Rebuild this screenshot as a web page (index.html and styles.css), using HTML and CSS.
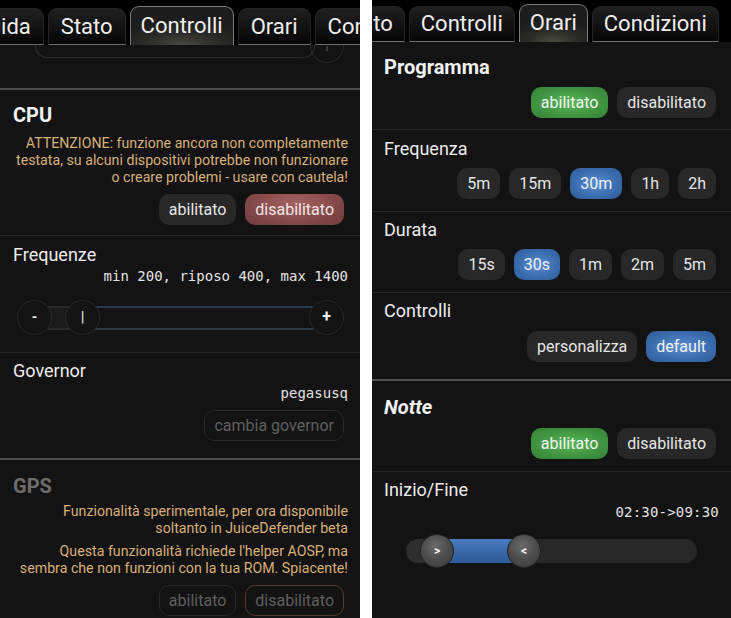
FILE: index.html
```html
<!DOCTYPE html>
<html lang="it">
<head>
<meta charset="utf-8">
<title>JuiceDefender</title>
<link rel="stylesheet" href="styles.css">
</head>
<body>
<div class="screens">
  <section class="phone phone-left">
    <nav class="tabs tabs-left">
      <div class="tab tab-first-left">Guida</div>
      <div class="tab">Stato</div>
      <div class="tab active">Controlli</div>
      <div class="tab">Orari</div>
      <div class="tab">Condizioni</div>
    </nav>
    <div class="remnant">
      <div class="remnant-card"></div>
      <div class="remnant-knob">l</div>
    </div>
    <div class="sec thick sec-cpu">
      <h2 class="title">CPU</h2>
      <p class="note note-cpu">ATTENZIONE: funzione ancora non completamente<br>testata, su alcuni dispositivi potrebbe non funzionare<br>o creare problemi - usare con cautela!</p>
      <div class="btns btns-cpu">
        <span class="btn">abilitato</span>
        <span class="btn red">disabilitato</span>
      </div>
    </div>
    <div class="sec sec-freq">
      <div class="label">Frequenze</div>
      <div class="mono mono-freq">min 200, riposo 400, max 1400</div>
      <div class="range">
        <span class="rbtn">-</span>
        <span class="seg-done" style="width:25px"></span>
        <span class="rthumb">|</span>
        <span class="seg-rest"></span>
        <span class="rbtn plus">+</span>
      </div>
    </div>
    <div class="sec sec-gov">
      <div class="label">Governor</div>
      <div class="mono mono-gov">pegasusq</div>
      <div class="btns btns-gov">
        <span class="btn ghost">cambia governor</span>
      </div>
    </div>
    <div class="sec thick sec-gps">
      <h2 class="title dim">GPS</h2>
      <p class="note note-gps1">Funzionalità sperimentale, per ora disponibile<br>soltanto in JuiceDefender beta</p>
      <p class="note note-gps2">Questa funzionalità richiede l'helper AOSP, ma<br>sembra che non funzioni con la tua ROM. Spiacente!</p>
      <div class="btns btns-gps">
        <span class="btn ghost">abilitato</span>
        <span class="btn ghost ghost-red">disabilitato</span>
      </div>
    </div>
  </section>

  <section class="phone phone-right">
    <nav class="tabs tabs-right">
      <div class="tab tab-first-right">Stato</div>
      <div class="tab">Controlli</div>
      <div class="tab active">Orari</div>
      <div class="tab">Condizioni</div>
    </nav>
    <div class="sec r-prog">
      <h2 class="title">Programma</h2>
      <div class="btns">
        <span class="btn green">abilitato</span>
        <span class="btn">disabilitato</span>
      </div>
    </div>
    <div class="sec r-freq">
      <div class="label">Frequenza</div>
      <div class="btns">
        <span class="btn">5m</span>
        <span class="btn">15m</span>
        <span class="btn blue">30m</span>
        <span class="btn">1h</span>
        <span class="btn">2h</span>
      </div>
    </div>
    <div class="sec r-dur">
      <div class="label">Durata</div>
      <div class="btns">
        <span class="btn">15s</span>
        <span class="btn blue">30s</span>
        <span class="btn">1m</span>
        <span class="btn">2m</span>
        <span class="btn">5m</span>
      </div>
    </div>
    <div class="sec r-ctrl">
      <div class="label">Controlli</div>
      <div class="btns btns-ctrl">
        <span class="btn">personalizza</span>
        <span class="btn blue">default</span>
      </div>
    </div>
    <div class="sec thick r-notte">
      <h2 class="title italic">Notte</h2>
      <div class="btns btns-notte">
        <span class="btn green">abilitato</span>
        <span class="btn">disabilitato</span>
      </div>
    </div>
    <div class="sec r-time">
      <div class="label">Inizio/Fine</div>
      <div class="mono mono-time">02:30-&gt;09:30</div>
      <div class="trange">
        <span class="tseg tseg-a" style="width:31px"></span>
        <span class="tthumb">&gt;</span>
        <span class="tfill" style="width:87px"></span>
        <span class="tthumb">&lt;</span>
        <span class="tseg tseg-b"></span>
      </div>
    </div>
  </section>
</div>
</body>
</html>
```
FILE: styles.css
```css
* { box-sizing: border-box; margin: 0; padding: 0; }

body {
  background: #ffffff;
  width: 731px;
  height: 618px;
  overflow: hidden;
  font-family: Roboto, "Noto Sans", sans-serif;
}

.screens {
  display: flex;
  gap: 12px;
}

.phone {
  background: #131313;
  height: 618px;
  overflow: hidden;
  color: #ececec;
}
.phone-left { width: 360px; }
.phone-right { width: 359px; }

/* Tabs */
.tabs {
  display: flex;
  align-items: flex-end;
  gap: 4px;
  background: #000;
  white-space: nowrap;
  position: relative;
  z-index: 2;
}
.tabs-left { height: 45px; }
.tabs-right { height: 42px; }

.tab {
  flex: none;
  font-size: 22px;
  color: #efefef;
  padding: 0 12px;
  height: 37px;
  line-height: 35px;
  border: 1px solid #242424;
  border-bottom: 1px solid #6e6e6e;
  border-radius: 9px 9px 0 0;
  background: linear-gradient(#202020, #060606);
}
.tab.active {
  height: 39px;
  padding: 0 10px;
  border-color: #7a7a7a;
  border-bottom: none;
  line-height: 37px;
  background: radial-gradient(ellipse 70% 60% at 50% 100%, #4a4940 0%, #2a2a28 55%, #1d1d1d 100%);
}
.tabs-right .tab { padding: 0 11px; height: 36px; line-height: 34px; }
.tabs-right .tab.active { height: 38px; line-height: 36px; padding: 0 10px; }
.tab-first-left { margin-left: -39px; }
.tab-first-right { margin-left: -43px; }

/* Remnant of the scrolled card */
.remnant {
  height: 43px;
  display: flex;
  align-items: flex-start;
  padding-left: 35px;
}
.remnant-card {
  width: 280px;
  height: 13px;
  border: 1px solid #2e2e2e;
  border-top: none;
  border-radius: 0 0 12px 12px;
}
.remnant-knob {
  width: 34px;
  height: 18px;
  margin-left: -5px;
  border: 1px solid #2a2a2a;
  border-top: none;
  border-radius: 0 0 17px 17px;
  color: #777;
  font-size: 8px;
  text-align: center;
  line-height: 8px;
}

/* Sections */
.sec {
  border-top: 1px solid #262626;
  padding-left: 13px;
  padding-right: 12px;
}
.phone-right .sec { padding-left: 12px; padding-right: 12px; }
.sec.thick { border-top: 2px solid #4f4f4f; }

.title {
  font-size: 20px;
  font-weight: 700;
  line-height: 24px;
  color: #f2f2f2;
}
.title.dim { color: #6c6c6c; }
.title.italic { font-style: italic; }

.label {
  font-size: 18px;
  line-height: 22px;
  color: #ededed;
}

.note {
  font-size: 14.2px;
  line-height: 17px;
  color: #d8b07a;
  text-align: right;
  white-space: nowrap;
}

.mono {
  font-family: "DejaVu Sans Mono", "Liberation Mono", monospace;
  font-size: 14px;
  line-height: 18px;
  color: #e4e4e4;
  text-align: right;
}

.btns {
  display: flex;
  justify-content: flex-end;
  gap: 9px;
  padding-right: 4px;
}
.phone-right .btns { padding-right: 3px; }

.btn {
  height: 31px;
  padding: 0 10px;
  border-radius: 10px;
  font-size: 16px;
  line-height: 31px;
  color: #e6e6e6;
  background: #282828;
  white-space: nowrap;
}
.btn.green {
  background: radial-gradient(ellipse at 50% 50%, #57b957 0%, #409440 60%, #367e36 100%);
  color: #f2f2f2;
}
.btn.blue {
  background: radial-gradient(ellipse at 50% 50%, #5b90d2 0%, #3a6cae 60%, #2e5a95 100%);
  color: #f2f2f2;
}
.btn.red {
  background: radial-gradient(ellipse at 50% 30%, #a66161 0%, #844949 60%, #6e3c3c 100%);
  color: #f0e6e6;
}
.btn.ghost {
  background: transparent;
  border: 1px solid #2a2a2a;
  color: #5f5f5f;
  line-height: 29px;
  padding: 0 9px;
}
.btn.ghost-red { border-color: #5a3634; }

/* Left vertical rhythm */
.sec-cpu { padding-top: 13px; padding-bottom: 10px; }
.note-cpu { margin-top: 8px; }
.btns-cpu { margin-top: 8px; }

.sec-freq { padding-top: 8px; padding-bottom: 17px; }
.mono-freq { margin-top: 1px; }

.sec-gov { padding-top: 7px; padding-bottom: 17px; }
.mono-gov { margin-top: 2px; }
.btns-gov { margin-top: 8px; }

.sec-gps { padding-top: 14px; }
.note-gps1 { margin-top: 5px; }
.note-gps2 { margin-top: 6px; }
.btns-gps { margin-top: 8px; }

/* Left slider */
.range {
  display: flex;
  align-items: center;
  margin-top: 15px;
  padding: 0 4px;
  height: 35px;
}
.rbtn, .rthumb {
  flex: none;
  width: 35px;
  height: 35px;
  border-radius: 50%;
  background: #141414;
  border: 1px solid #2a2a2a;
  color: #f0f0f0;
  font-size: 14px;
  font-weight: 700;
  text-align: center;
  line-height: 32px;
  position: relative;
  z-index: 1;
}
.rthumb { font-weight: 400; font-size: 15px; margin-left: -5px; }
.rbtn.plus { margin-left: -4px; font-size: 16px; }
.seg-done {
  flex: none;
  height: 24px;
  margin-left: -7px;
  background: #1b1b1b;
  border-top: 2px solid #2a2a2a;
  border-bottom: 2px solid #2a2a2a;
}
.seg-rest {
  flex: 1;
  height: 24px;
  margin-left: -5px;
  background: #131313;
  border-top: 2px solid #2b3846;
  border-bottom: 2px solid #2b3846;
}

/* Right vertical rhythm */
.r-prog { border-top: none; padding-top: 13px; padding-bottom: 11px; }
.r-prog .btns { margin-top: 8px; }
.r-freq { padding-top: 8px; padding-bottom: 12px; }
.r-freq .btns { margin-top: 8px; }
.r-dur { padding-top: 7px; padding-bottom: 12px; }
.r-dur .btns { margin-top: 8px; }
.r-ctrl { padding-top: 7px; padding-bottom: 17px; }
.btns-ctrl { margin-top: 9px; }
.r-notte { padding-top: 14px; padding-bottom: 12px; }
.btns-notte { margin-top: 9px; }
.r-time { padding-top: 7px; }
.mono-time { margin-top: 2px; letter-spacing: 0.2px; }

/* Right time range */
.trange {
  display: flex;
  align-items: center;
  height: 34px;
  margin: 13px 22px 0 22px;
}
.tseg {
  height: 24px;
  background: #282828;
  flex: none;
}
.tseg-a { border-radius: 12px 0 0 12px; background: #2e2e2e; }
.tseg-b { flex: 1; margin-left: -17px; border-radius: 0 12px 12px 0; }
.tfill {
  flex: none;
  height: 24px;
  margin-left: -17px;
  background: linear-gradient(#4a7cc0, #3566a8 60%, #2f5c99);
}
.tthumb {
  flex: none;
  width: 34px;
  height: 34px;
  margin-left: -17px;
  border-radius: 50%;
  background: radial-gradient(circle at 45% 35%, #6a6a6a 0%, #4c4c4c 50%, #383838 100%);
  border: 1px solid #222;
  color: #f2f2f2;
  font-size: 12px;
  font-weight: 700;
  text-align: center;
  line-height: 32px;
  position: relative;
  z-index: 1;
}
```
